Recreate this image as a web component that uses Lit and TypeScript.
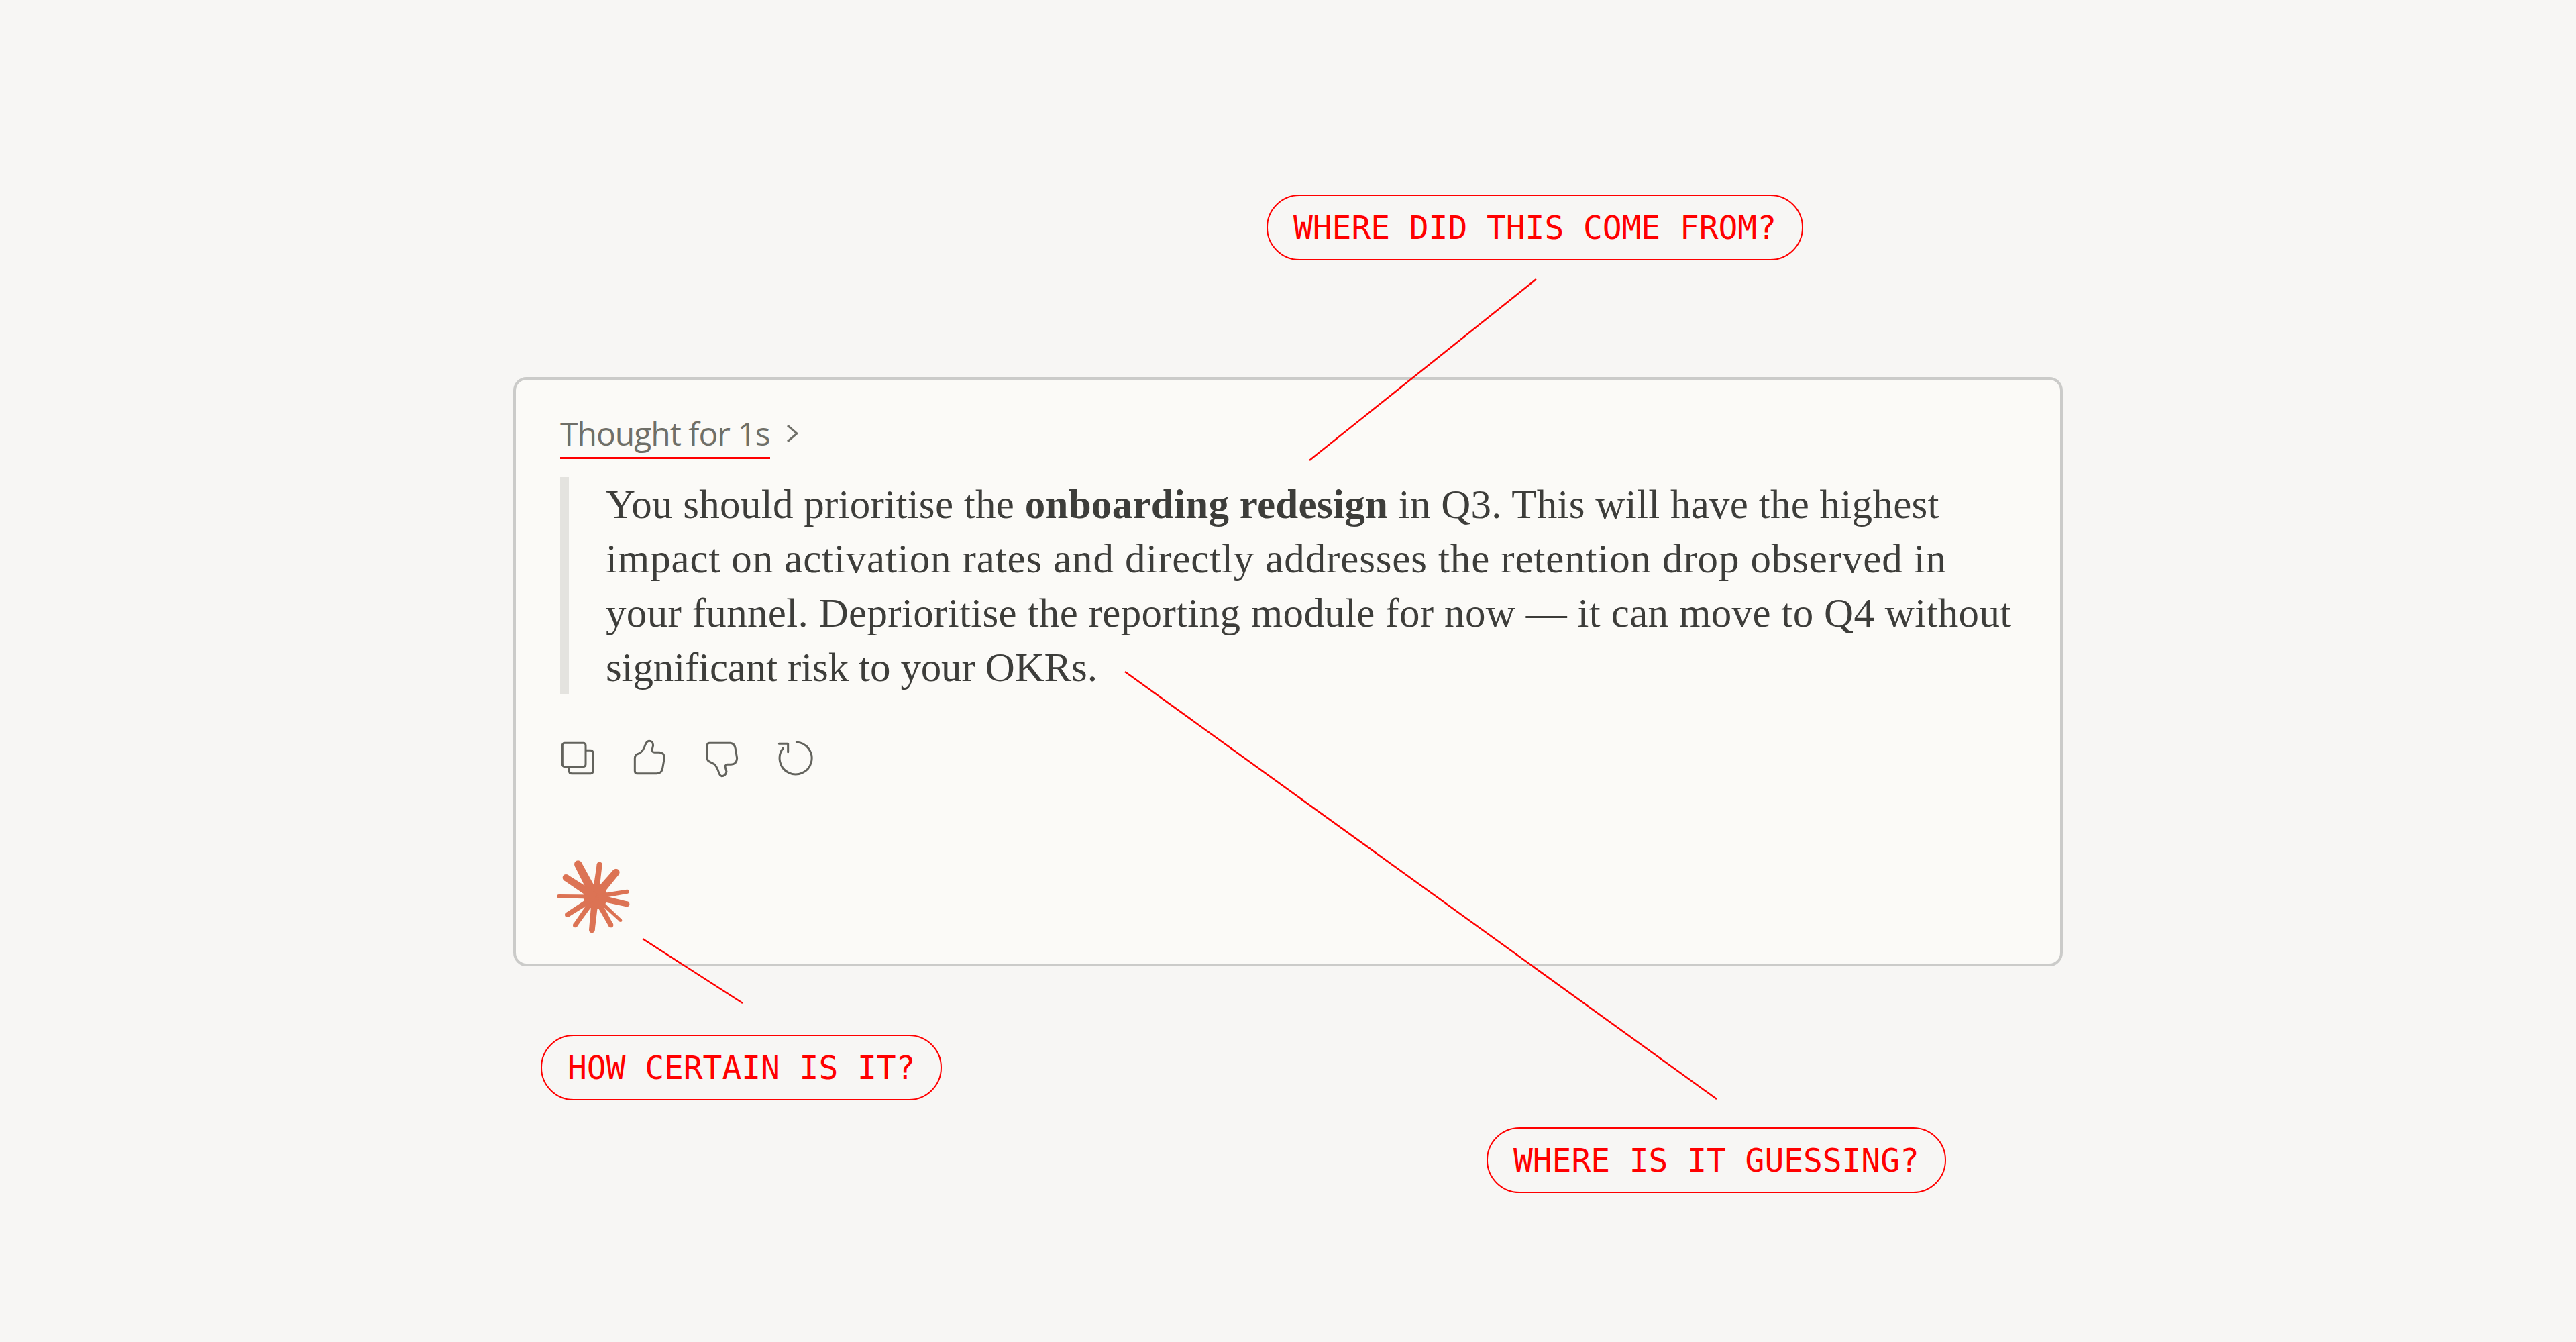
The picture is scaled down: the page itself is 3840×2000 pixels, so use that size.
import { LitElement, html, css, svg } from "lit";
import { customElement } from "lit/decorators.js";

const RAYS: [number, number, number][] = [
  [188, 84, 34], [284, 86, 24], [358, 120, 32], [408, 206, 18], [406, 262, 24], [378, 335, 14],
  [335, 356, 22], [250, 378, 26], [175, 357, 20], [140, 310, 22], [102, 227, 16], [134, 144, 30],
];
const CX = 265, CY = 230;

function ray([x, y, w]: [number, number, number]) {
  const dx = x - CX, dy = y - CY;
  const len = Math.hypot(dx, dy);
  const nx = -dy / len, ny = dx / len;
  const b = w * 0.6, t = w / 2;
  const pts = [
    [CX + nx * b, CY + ny * b], [x + nx * t, y + ny * t], [x - nx * t, y - ny * t], [CX - nx * b, CY - ny * b],
  ].map((p) => p.map((v) => v.toFixed(1)).join(",")).join(" ");
  return svg`<polygon points=${pts}></polygon><circle cx=${x} cy=${y} r=${t}></circle>`;
}

@customElement("app-root")
export class AppRoot extends LitElement {
  static styles = css`
    :host { display: block; position: relative; width: 3840px; height: 2000px; background: #f7f6f4; overflow: hidden; }
    .stage { box-sizing: border-box; height: 100%; padding-top: 2px; display: flex; align-items: center; justify-content: center; }
    .card { box-sizing: border-box; width: 2310px; height: 878px; background: #fbfaf7; border: 4px solid #cbcbc9; border-radius: 20px; padding: 50px 64px 0 66px; }
    .thought { display: flex; align-items: center; gap: 24px; font: 400 48px/60px "Open Sans", sans-serif; color: #6f6f68; height: 68px; }
    .thought .label { border-bottom: 3px solid #ff0000; padding-bottom: 5px; letter-spacing: -1px; }
    .chev { width: 18px; height: 26px; fill: none; stroke: #6f6f68; stroke-width: 3; margin-top: -8px; }
    .answer { margin: 27px 0 0; border-left: 13px solid #e4e3df; padding-left: 55px; font: 400 61px/81px "Liberation Serif", serif; color: #3d3d3a; white-space: nowrap; }
    .answer b { font-weight: 700; }
    .l { display: block; }
    .l1 { letter-spacing: 0.28px; }
    .l2 { letter-spacing: 0.87px; }
    .l3 { letter-spacing: 0.33px; }
    .l4 { letter-spacing: -0.14px; }
    .actions { display: flex; gap: 48px; margin-top: 65px; }
    .actions svg { width: 60px; height: 60px; fill: none; stroke: #63635d; stroke-width: 9; stroke-linejoin: round; stroke-linecap: round; }
    .star { display: block; width: 114.67px; height: 113.33px; margin: 120px 0 0 -8px; fill: #dc7354; }
    .lines { position: absolute; inset: 0; width: 3840px; height: 2000px; pointer-events: none; stroke: #ff0000; stroke-width: 2.5; }
    .pill { position: absolute; box-sizing: border-box; height: 98px; display: flex; align-items: center; padding: 0 38px; border: 2.5px solid #ff0000; border-radius: 49px; font: 400 48px/1 "DejaVu Sans Mono", monospace; letter-spacing: -0.1px; color: #ff0000; white-space: pre; }
    .p1 { left: 1888px; top: 290px; }
    .p2 { left: 806px; top: 1542px; }
    .p3 { left: 2216px; top: 1680px; }
  `;

  render() {
    return html`
      <div class="stage">
        <div class="card">
          <div class="thought">
            <span class="label">Thought for 1s</span>
            <svg class="chev" viewBox="0 0 18 26"><path d="M2 1 L16 13 L2 25"></path></svg>
          </div>
          <div class="answer">
            <span class="l l1">You should prioritise the <b>onboarding redesign</b> in Q3. This will have the highest</span>
            <span class="l l2">impact on activation rates and directly addresses the retention drop observed in</span>
            <span class="l l3">your funnel. Deprioritise the reporting module for now — it can move to Q4 without</span>
            <span class="l l4">significant risk to your OKRs.</span>
          </div>
          <div class="actions">
            <svg viewBox="108 60 180 180"><rect x="118" y="82" width="104" height="106" rx="10"></rect><path d="M225 115 H243 Q255 115 255 127 V208 Q255 218 245 218 H160 Q148 218 148 206 V190"></path></svg>
            <svg viewBox="432 60 180 180"><path d="M452 218 H540 Q562 218 566 195 L574 150 Q576 126 552 124 H530 Q518 124 520 110 L524 92 Q522 72 505 73 Q494 75 488 92 Q480 118 462 128 Q442 132 442 150 V206 Q442 218 452 218 Z"></path></svg>
            <svg viewBox="756 60 180 180"><path d="M776 82 H870 Q888 84 892 108 L899 150 Q898 176 872 178 H855 Q842 180 848 195 L852 210 Q848 230 830 230 Q822 228 818 215 Q808 184 795 175 L775 165 Q766 160 766 150 V92 Q766 82 776 82 Z"></path></svg>
            <svg viewBox="1080 60 180 180"><path d="M1165 78 A72 72 0 1 1 1105 105"></path><path d="M1087 85 H1127 V122"></path></svg>
          </div>
          <svg class="star" viewBox="84 60 344 340">
            <circle cx="266" cy="230" r="54"></circle>
            ${RAYS.map(ray)}
          </svg>
        </div>
      </div>
      <svg class="lines" viewBox="0 0 3840 2000">
        <line x1="2290" y1="416" x2="1952" y2="686"></line>
        <line x1="1677" y1="1001" x2="2559" y2="1638"></line>
        <line x1="958" y1="1399" x2="1107" y2="1495"></line>
      </svg>
      <div class="pill p1">WHERE DID THIS COME FROM?</div>
      <div class="pill p2">HOW CERTAIN IS IT?</div>
      <div class="pill p3">WHERE IS IT GUESSING?</div>
    `;
  }
}
